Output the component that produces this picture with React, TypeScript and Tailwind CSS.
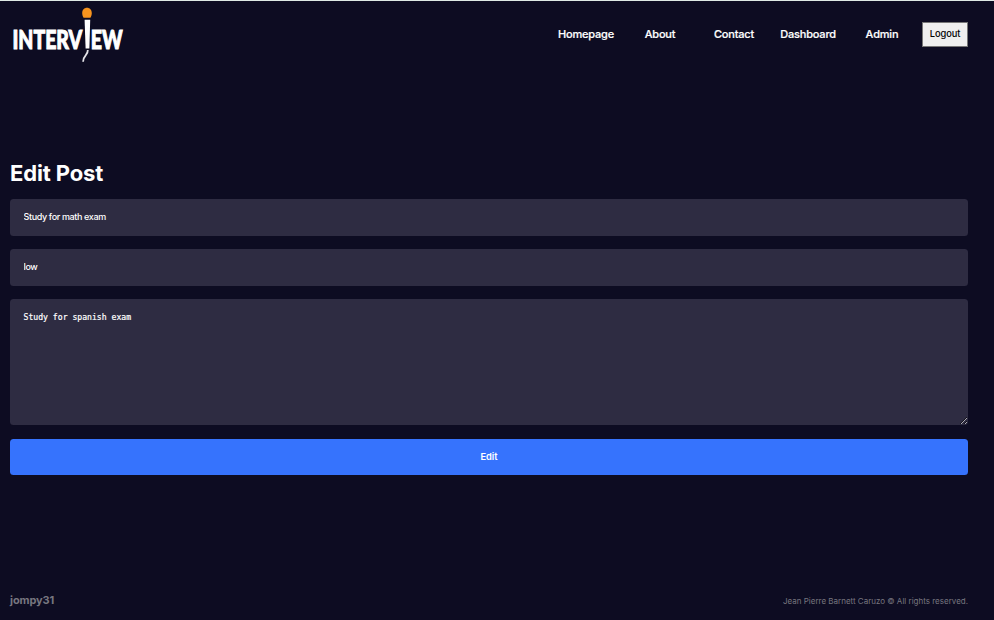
const links = ["Homepage", "About", "Contact", "Dashboard", "Admin"];

function Logo() {
  return (
    <svg width="140" height="66" viewBox="0 0 140 66" className="block shrink-0">
      <text
        transform="translate(12.4 47.700) scale(0.75 1)"
        fill="#fff"
        stroke="#fff"
        strokeWidth="1"
        fontFamily="Lato, sans-serif"
        fontWeight="900"
        fontSize="26"
      >
        INTERV
        <tspan x="104.500">EW</tspan>
      </text>
      <path d="M82.200 12c0-3.200 2-5.300 4.800-5.300s4.800 2.100 4.800 5.300c0 1.800-.5 3.500-1.400 4.800h-6.800c-.9-1.300-1.400-3-1.400-4.800Z" fill="#f7941e" />
      <path d="M84.600 18.800h5.600l-.8 28.800h-3.800Z" fill="#fff" />
      <path d="M87.800 49c.3 5.500-4.500 4.500-4.700 11.800" fill="none" stroke="#e3e3e8" strokeWidth="1.800" />
    </svg>
  );
}

export default function App() {
  return (
    <div className="flex h-[620px] w-[994px] flex-col border-t border-[#dfeae5] bg-[#0d0c22] pr-[26px] font-[Inter,sans-serif] text-white">
      <header className="flex h-[66px] items-center justify-between">
        <Logo />
        <nav className="flex items-center">
          <div className="flex gap-[7px]">
            {links.map((link) => (
              <a key={link} href="#" className="w-[67px] text-center text-[11px] leading-4 font-medium tracking-[-0.180px] whitespace-nowrap [-webkit-text-stroke:0.2px_white]">
                {link}
              </a>
            ))}
          </div>
          <button className="ml-[6.500px] h-[25px] w-[46px] border border-[#767676] bg-[#efefef] pb-px text-[9.300px] leading-3 font-medium tracking-[-0.1px] text-black">
            Logout
          </button>
        </nav>
      </header>
      <main className="ml-[10px] flex flex-col pt-[92px]">
        <h1 className="h-[40px] text-[22px] leading-[28px] font-bold tracking-[-0.150px]">Edit Post</h1>
        <form className="flex flex-col">
          <input
            className="mb-[13px] h-[37px] rounded-[3.500px] bg-[#2e2c42] px-[13.500px] pb-[2px] text-[9px] font-medium tracking-[-0.360px] outline-none"
            defaultValue="Study for math exam"
          />
          <input
            className="mb-[13px] h-[37px] rounded-[3.500px] bg-[#2e2c42] px-[13.500px] pb-[2px] text-[9px] font-medium tracking-[-0.360px] outline-none"
            defaultValue="low"
          />
          <textarea
            className="mb-[14px] h-[126px] resize rounded-[3.500px] bg-[#2e2c42] px-[13.500px] py-[12px] font-['DejaVu_Sans_Mono',monospace] text-[8.150px] leading-3 outline-none [-webkit-text-stroke:0.2px_white]"
            defaultValue="Study for spanish exam"
          />
          <button type="button" className="h-[36px] rounded-[3.500px] bg-[#3673fd] text-[9.300px] leading-3 font-semibold">
            Edit
          </button>
        </form>
      </main>
      <footer className="mt-auto mb-[12px] ml-[10px] flex h-4 items-center justify-between text-[#77767f]">
        <span className="text-[11px] leading-4 font-bold tracking-[-0.1px]">jompy31</span>
        <span className="pt-[2px] text-[8px] leading-3">Jean Pierre Barnett Caruzo © All rights reserved.</span>
      </footer>
    </div>
  );
}
